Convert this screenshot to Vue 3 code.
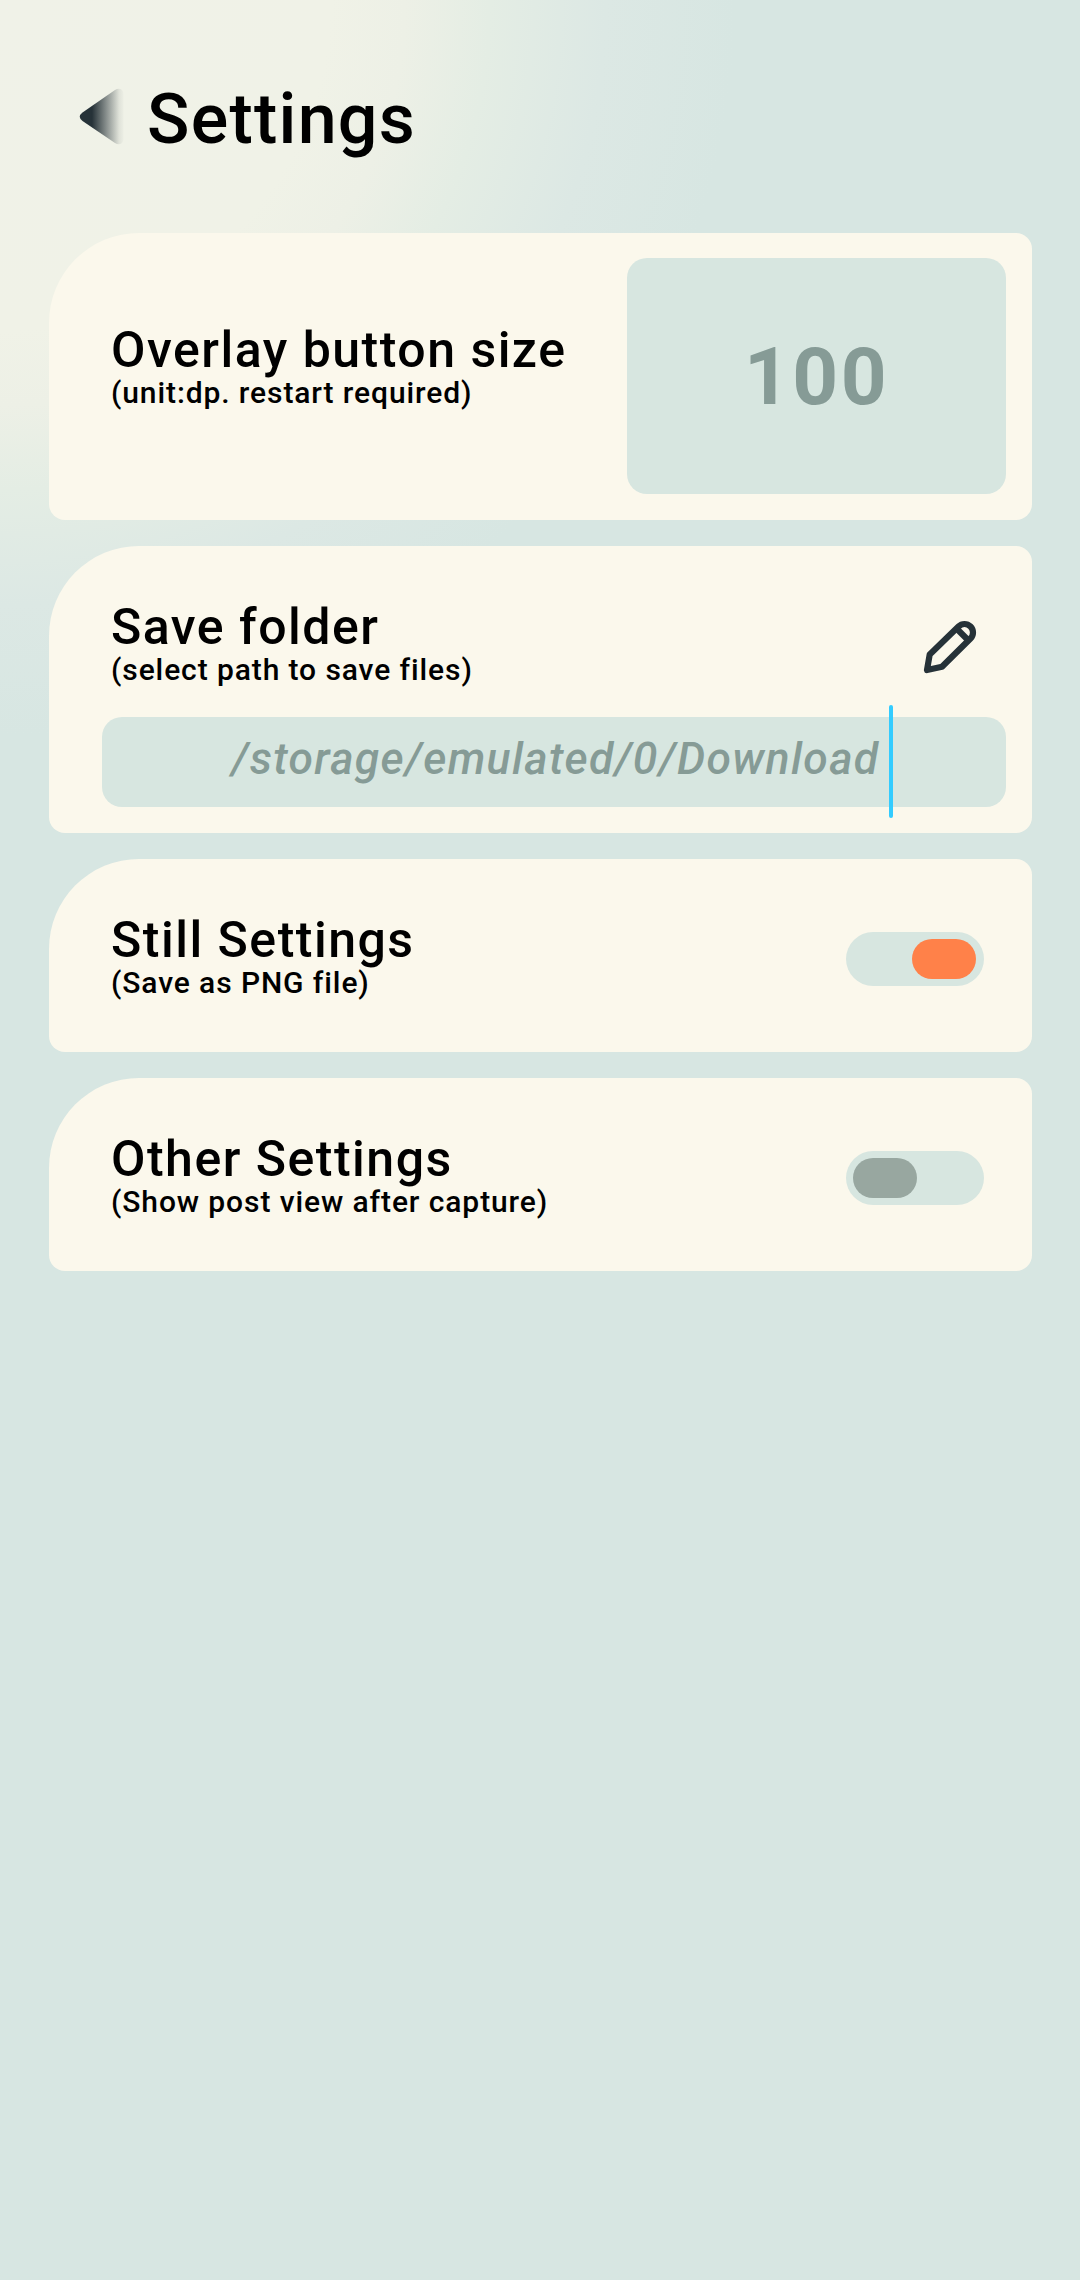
<script setup>
import { ref } from 'vue'

const buttonSize = ref('100')
const folder = ref('/storage/emulated/0/Download')
const toggles = ref([
  { title: 'Still Settings', note: '(Save as PNG file)', on: true },
  { title: 'Other Settings', note: '(Show post view after capture)', on: false },
])
</script>

<template>
  <main class="screen">
    <header class="header">
      <svg class="back" width="46" height="58" viewBox="0 0 46 58">
        <defs>
          <linearGradient id="fade" x1="0" y1="0" x2="1" y2="0">
            <stop offset="0.28" stop-color="#263238" />
            <stop offset="0.9" stop-color="#263238" stop-opacity="0.08" />
            <stop offset="1" stop-color="#263238" stop-opacity="0.02" />
          </linearGradient>
        </defs>
        <path
          d="M3.500 24.500 36 2Q40 -0.500 43 2Q44.500 3.500 44.500 6V51Q44.500 53.500 43 55Q40 57.500 36 55L3.500 33Q-2 28.700 3.500 24.500Z"
          fill="url(#fade)"
        />
      </svg>
      <h1 class="title">Settings</h1>
    </header>

    <section class="card size-card">
      <div class="label size-label">
        <h2>Overlay button size</h2>
        <p>(unit:dp. restart required)</p>
      </div>
      <div class="field size-field">{{ buttonSize }}</div>
    </section>

    <section class="card folder-card">
      <div class="row">
        <div class="label">
          <h2>Save folder</h2>
          <p>(select path to save files)</p>
        </div>
        <svg class="pencil" width="54" height="54" viewBox="0 0 54 54" fill="none" stroke="#263238" stroke-width="6.2" stroke-linejoin="round">
          <path d="M4 50 6.700 34.500 35.500 6.500A8.400 8.400 0 0 1 47.500 18.500L19 46.800Z" />
          <path d="M34 9 45 20" />
        </svg>
      </div>
      <div class="field path-field">
        <span class="path">{{ folder }}<i class="caret"></i></span>
      </div>
    </section>

    <section v-for="t in toggles" :key="t.title" class="card toggle-card">
      <div class="label">
        <h2>{{ t.title }}</h2>
        <p>{{ t.note }}</p>
      </div>
      <div class="switch" :class="{ on: t.on }"><span class="knob"></span></div>
    </section>
  </main>
</template>

<style>
body {
  margin: 0;
}
</style>

<style scoped>
.screen {
  box-sizing: border-box;
  width: 1080px;
  height: 2280px;
  padding: 0 48px 0 49px;
  display: flex;
  flex-direction: column;
  gap: 26px;
  overflow: hidden;
  font-family: Roboto, 'Liberation Sans', sans-serif;
  font-weight: 500;
  color: #000;
  background: radial-gradient(
      circle at 0 0,
      #f0f2e8 0,
      #f0f2e7 330px,
      #edf0e6 405px,
      #e4ede4 490px,
      #dce8e4 605px,
      #d7e6e2 735px
    )
    #d7e6e2;
}
.header {
  box-sizing: border-box;
  height: 207px;
  padding: 88px 0 0 30px;
  display: flex;
  align-items: flex-start;
}
.back {
  flex: none;
}
.title {
  margin: -9px 0 0 22px;
  font-size: 70px;
  line-height: 80px;
  font-weight: 500;
  letter-spacing: 0.018em;
}
.card {
  box-sizing: border-box;
  flex: none;
  border-radius: 90px 16px 16px 16px;
  background: #fbf8ec;
  display: flex;
}
h2,
p {
  margin: 0;
  font-weight: 500;
  white-space: nowrap;
}
h2 {
  font-size: 50px;
  line-height: 58px;
  letter-spacing: 0.03em;
}
p {
  font-size: 30px;
  line-height: 36px;
  letter-spacing: 0.03em;
  margin-top: -4px;
}
.label {
  padding-left: 62px;
}
.size-card {
  height: 287px;
  padding: 25px 26px 26px 0;
  justify-content: space-between;
}
.size-label {
  padding-top: 63px;
}
.field {
  box-sizing: border-box;
  background: #d7e6e0;
  border-radius: 20px;
  color: #869b96;
  display: flex;
  align-items: center;
  justify-content: center;
}
.size-field {
  width: 379px;
  padding-top: 1px;
  font-size: 80px;
  font-weight: 700;
  letter-spacing: 0.03em;
}
.folder-card {
  height: 287px;
  padding: 52px 26px 26px 0;
  flex-direction: column;
  justify-content: space-between;
}
.row {
  display: flex;
  justify-content: space-between;
}
.pencil {
  margin: 22px 29px 0 0;
}
.path-field {
  height: 90px;
  margin-left: 53px;
  padding-left: 3px;
}
.path {
  position: relative;
  font-size: 44.5px;
  line-height: 52px;
  font-style: italic;
  letter-spacing: 0.03em;
  margin-top: -6px;
}
.caret {
  position: absolute;
  right: -14px;
  top: -28px;
  width: 4px;
  height: 113px;
  border-radius: 2px;
  background: #33ccff;
}
.toggle-card {
  height: 193px;
  padding: 52px 48px 0 0;
  justify-content: space-between;
}
.switch {
  box-sizing: border-box;
  width: 138px;
  height: 54px;
  margin-top: 21px;
  padding: 7px;
  border-radius: 27px;
  background: #d7e6e0;
  display: flex;
}
.switch.on {
  justify-content: flex-end;
  padding-right: 8px;
}
.knob {
  width: 64px;
  height: 40px;
  border-radius: 20px;
  background: #98a7a0;
}
.on .knob {
  background: #ff8149;
}
</style>
